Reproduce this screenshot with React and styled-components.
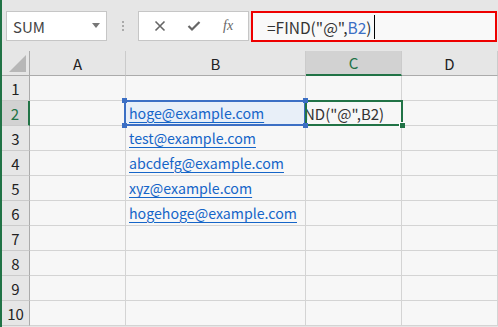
import React from 'react';
import styled, { createGlobalStyle, css } from 'styled-components';

const GlobalStyle = createGlobalStyle`
  html, body { margin: 0; padding: 0; background: #e6e6e6; }
  body { width: 498px; height: 327px; overflow: hidden; }
`;

const FONT = `"Noto Sans CJK JP", "Noto Sans", sans-serif`;
const GREEN = '#217346';
const BLUE = '#3c6fc4';

const Page = styled.div`
  width: 498px;
  height: 327px;
  box-sizing: border-box;
  border-left: 2px solid ${GREEN};
  background: #e6e6e6;
  display: flex;
  flex-direction: column;
  font-family: ${FONT};
`;

const Toolbar = styled.div`
  height: 51px;
  display: flex;
  align-items: flex-start;
  padding-top: 11px;
  box-sizing: border-box;
`;

const NameBox = styled.div`
  margin-left: 4px;
  width: 101px;
  height: 30px;
  box-sizing: border-box;
  background: #fff;
  border: 1px solid #c6c6c6;
  display: flex;
  align-items: center;
  justify-content: space-between;
  padding: 0 6px 0 6px;
  color: #444;
  font-size: 15px;
`;

const Caret = styled.span`
  width: 0;
  height: 0;
  border-left: 4px solid transparent;
  border-right: 4px solid transparent;
  border-top: 5px solid #777;
  margin-top: -2px;
`;

const Grip = styled.div`
  width: 2px;
  height: 30px;
  margin: 0 14px 0 15px;
  display: flex;
  flex-direction: column;
  justify-content: center;
  gap: 2px;
  & > span { width: 2px; height: 2px; background: #aaa; }
`;

const Buttons = styled.div`
  width: 111px;
  height: 30px;
  box-sizing: border-box;
  background: #fff;
  border: 1px solid #c6c6c6;
  display: flex;
  align-items: center;
  justify-content: space-around;
  padding: 0 4px;
  color: #666;
`;

const Fx = styled.span`
  font-family: "Liberation Serif", serif;
  font-style: italic;
  font-size: 14px;
  color: #666;
`;

const FormulaBox = styled.div`
  margin-left: 2px;
  width: 246px;
  height: 31px;
  box-sizing: border-box;
  border: 2px solid #ee0000;
  background: #f9f9f9;
  display: flex;
  align-items: center;
  padding-left: 14px;
  font-size: 15.5px;
  color: #333;
  white-space: nowrap;
`;

const Ref = styled.span`
  color: ${BLUE};
`;

const TextCursor = styled.span`
  display: inline-block;
  width: 1px;
  height: 24px;
  background: #000;
  margin-left: 2px;
`;

const Sheet = styled.div`
  display: grid;
  grid-template-columns: 28px 96px 180px 96px 96px;
  grid-auto-rows: 25px;
  background: #f7f7f7;
`;

const Corner = styled.div`
  background: #e6e6e6;
  border-right: 1px solid #ababab;
  border-bottom: 1px solid #ababab;
  display: flex;
  align-items: flex-end;
  justify-content: flex-end;
  padding: 0 3px 3px 0;
  box-sizing: border-box;
  &::after {
    content: '';
    width: 0;
    height: 0;
    border-left: 17px solid transparent;
    border-bottom: 17px solid #b7b7b7;
  }
`;

const ColHead = styled.div`
  background: ${p => (p.$active ? '#d2d2d2' : '#e6e6e6')};
  border-right: 1px solid #cbcbcb;
  border-bottom: ${p => (p.$active ? `2px solid ${GREEN}` : '1px solid #ababab')};
  box-sizing: border-box;
  display: flex;
  align-items: center;
  justify-content: center;
  font-size: 15px;
  color: ${p => (p.$active ? GREEN : '#222')};
`;

const RowHead = styled.div`
  background: ${p => (p.$active ? '#d2d2d2' : '#e6e6e6')};
  border-right: ${p => (p.$active ? `2px solid ${GREEN}` : '1px solid #ababab')};
  border-bottom: 1px solid #cbcbcb;
  box-sizing: border-box;
  display: flex;
  align-items: center;
  justify-content: center;
  font-size: 15px;
  color: ${p => (p.$active ? GREEN : '#222')};
`;

const Cell = styled.div`
  position: relative;
  border-right: 1px solid #d4d4d4;
  border-bottom: 1px solid #d4d4d4;
  box-sizing: border-box;
  display: flex;
  align-items: center;
  padding-left: ${p => (p.$current ? '0' : '3px')};
  font-size: 14.2px;
  white-space: nowrap;
  ${p => p.$ref && css`
    background: #e8eff8;
    &::before {
      content: '';
      position: absolute;
      left: -2px; top: -1px; right: -1px; bottom: -1px;
      border: 2px solid ${BLUE};
      pointer-events: none;
    }
  `}
  ${p => p.$current && css`
    &::before {
      content: '';
      position: absolute;
      left: -1px; top: -1px; right: -2px; bottom: -1px;
      border: 2px solid ${GREEN};
      pointer-events: none;
      z-index: 2;
    }
    &::after {
      content: '';
      position: absolute;
      right: -4px; bottom: -3px;
      width: 5px; height: 5px;
      background: ${GREEN};
      border: 1px solid #fff;
      border-width: 1px 0 0 1px;
      z-index: 3;
    }
  `}
`;

const Handle = styled.span`
  position: absolute;
  width: 5px;
  height: 5px;
  background: ${BLUE};
  z-index: 4;
  ${p => (p.$top ? 'top: -3px;' : 'bottom: -3px;')}
  ${p => (p.$left ? 'left: -4px;' : 'right: -3px;')}
`;

const Link = styled.span`
  color: #1565c8;
  text-decoration: underline;
  text-underline-offset: 3px;
`;

const Clip = styled.div`
  overflow: hidden;
  width: 100%;
`;

const Editing = styled.span`
  display: inline-block;
  margin-left: -23px;
  font-size: 15px;
  color: #333;
`;

const cols = ['A', 'B', 'C', 'D'];
const emails = {
  2: 'hoge@example.com',
  3: 'test@example.com',
  4: 'abcdefg@example.com',
  5: 'xyz@example.com',
  6: 'hogehoge@example.com',
};

export default function App() {
  const rows = Array.from({ length: 10 }, (_, i) => i + 1);
  return (
    <>
      <GlobalStyle />
      <Page>
        <Toolbar>
          <NameBox>
            <span>SUM</span>
            <Caret />
          </NameBox>
          <Grip><span /><span /><span /></Grip>
          <Buttons>
            <svg width="12" height="12" viewBox="0 0 12 12">
              <path d="M1.5 1.5 L10.5 10.5 M10.5 1.5 L1.5 10.5" stroke="#666" strokeWidth="1.6" fill="none" />
            </svg>
            <svg width="14" height="12" viewBox="0 0 14 12">
              <path d="M1.5 6 L5 9.5 L12.5 2" stroke="#666" strokeWidth="2.2" fill="none" />
            </svg>
            <Fx>fx</Fx>
          </Buttons>
          <FormulaBox>
            =FIND("@",<Ref>B2</Ref>)<TextCursor />
          </FormulaBox>
        </Toolbar>
        <Sheet>
          <Corner />
          {cols.map(c => (
            <ColHead key={c} $active={c === 'C'}>{c}</ColHead>
          ))}
          {rows.map(r => (
            <React.Fragment key={r}>
              <RowHead $active={r === 2}>{r}</RowHead>
              <Cell />
              <Cell $ref={r === 2}>
                {r === 2 && (
                  <>
                    <Handle $top $left />
                    <Handle $left />
                    <Handle $top />
                    <Handle />
                  </>
                )}
                {emails[r] && <Link>{emails[r]}</Link>}
              </Cell>
              <Cell $current={r === 2}>
                {r === 2 && (
                  <Clip>
                    <Editing>=FIND("@",B2)</Editing>
                  </Clip>
                )}
              </Cell>
              <Cell />
            </React.Fragment>
          ))}
        </Sheet>
      </Page>
    </>
  );
}
